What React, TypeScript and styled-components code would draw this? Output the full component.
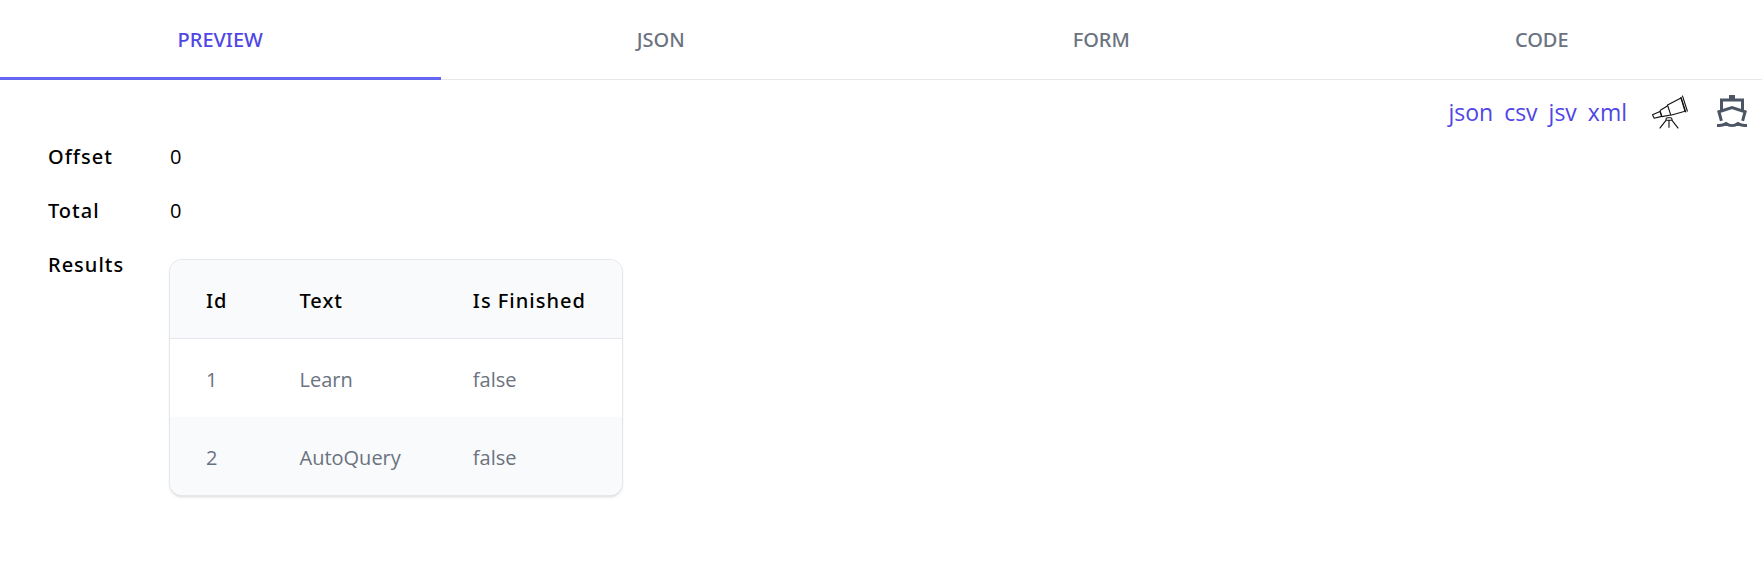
import React, { useState } from "react";
import styled, { createGlobalStyle } from "styled-components";

const GlobalStyle = createGlobalStyle`
  *, *::before, *::after { box-sizing: border-box; }
  body {
    margin: 0;
    background: #fff;
    color: #000;
    font-family: "Segoe UI", "Open Sans", "Noto Sans", sans-serif;
    font-size: 20px;
    line-height: 30px;
  }
`;

const mediumFont = `
  font-family: "Segoe UI", "Noto Sans", "Open Sans", sans-serif;
  font-weight: 500;
`;

const TabBar = styled.nav`
  display: flex;
  border-bottom: 1px solid #e5e7eb;
`;

const Tab = styled.button<{ $active: boolean }>`
  flex: 1 1 0;
  min-width: 0;
  margin: 0 0 -1px;
  padding: 25px 6px 22px;
  border: 0;
  border-bottom: 3px solid ${(p) => (p.$active ? "#6366f1" : "transparent")};
  background: none;
  color: ${(p) => (p.$active ? "#4f46e5" : "#6b7280")};
  font: inherit;
  ${mediumFont}
  text-align: center;
  text-transform: uppercase;
  cursor: pointer;
`;

const Toolbar = styled.div`
  display: flex;
  justify-content: flex-end;
  align-items: center;
  height: 50px;
  padding: 12px 12px 0 0;
`;

const Formats = styled.div`
  display: flex;
  gap: 11px;
  margin-right: 24px;
  padding-top: 2px;
`;

const FormatLink = styled.a`
  color: #4f46e5;
  font-size: 23px;
  line-height: 36px;
  text-decoration: none;
`;

const IconLink = styled.a`
  display: block;
  width: 36px;
  height: 36px;
  color: ${(p) => p.color};

  & + & {
    margin-left: 27px;
  }

  svg {
    display: block;
  }
`;

const Properties = styled.table`
  margin-left: 48px;
  border-collapse: collapse;
`;

const PropertyName = styled.th`
  min-width: 122px;
  padding: 12px 45px 12px 0;
  ${mediumFont}
  letter-spacing: 1px;
  text-align: left;
  vertical-align: top;
`;

const PropertyValue = styled.td<{ $block?: boolean }>`
  padding: ${(p) => (p.$block ? "22px 0" : "12px 0")};
  vertical-align: top;
`;

const Card = styled.div`
  overflow: hidden;
  border-radius: 12px;
  box-shadow: 0 0 0 1px #e5e7eb, 0 2px 3px rgba(0, 0, 0, 0.16);
`;

const DataTable = styled.table`
  border-collapse: separate;
  border-spacing: 0;
`;

const HeadCell = styled.th`
  padding: 26px 36px 22px;
  border-bottom: 1px solid #e5e7eb;
  background: #f9fafb;
  ${mediumFont}
  letter-spacing: 1px;
  text-align: left;
  white-space: nowrap;
`;

const BodyRow = styled.tr`
  background: #fff;

  &:nth-child(even) {
    background: #f9fafb;
  }
`;

const BodyCell = styled.td`
  padding: 26px 36px 22px;
  color: #6b7280;
  white-space: nowrap;
`;

const TelescopeIcon = () => (
  <svg width="36" height="36" viewBox="0 0 36 36" fill="none" stroke="currentColor" strokeWidth="1.1" strokeLinejoin="round" overflow="visible" aria-hidden="true">
    <path d="M1.500 21.800 9 18.600 10.700 23.400 3.200 25.200z" />
    <path d="M9 17.500 16.700 12.800M10.900 23.600 19.700 22M9 17.500 10.900 23.600" />
    <path d="M16.500 12 30 5 34 18.300 19.800 22.200z" />
    <path d="M29.900 4 34.900 19.300M31.400 2.600 36.500 18.500" />
    <path d="M15 27.300v-1q0-1.600 1.600-1.600h2.800q1.600 0 1.600 1.600v1zM15 27.300 8.700 35.300M21 27.300 27.300 35.300M18 27.300v7.500" />
  </svg>
);

const FerryIcon = () => (
  <svg width="36" height="36" viewBox="0 0 36 36" fill="none" stroke="currentColor" strokeWidth="3" aria-hidden="true">
    <path d="M15 2h6v4.500h-6z" fill="currentColor" stroke="none" />
    <path d="M7.500 17V7h21V17" />
    <path d="M7.400 27.800 4.900 18.700 18 14.500l13.100 4.200L28.600 27.800" />
    <path d="M3 32.500h2.500c2.500 0 4.500-.8 6.500-2 3.500 2.600 8.500 2.600 12 0 2 1.200 4 2 6.500 2H33" />
  </svg>
);

const TABS = ["Preview", "JSON", "Form", "Code"];
const FORMATS = ["json", "csv", "jsv", "xml"];
const RESULTS = [
  { id: 1, text: "Learn", isFinished: false },
  { id: 2, text: "AutoQuery", isFinished: false },
];

export default function App() {
  const [active, setActive] = useState("Preview");

  return (
    <>
      <GlobalStyle />
      <TabBar>
        {TABS.map((tab) => (
          <Tab key={tab} type="button" $active={tab === active} onClick={() => setActive(tab)}>
            {tab}
          </Tab>
        ))}
      </TabBar>
      <main>
        <Toolbar>
          <Formats>
            {FORMATS.map((format) => (
              <FormatLink key={format} href={`#${format}`}>{format}</FormatLink>
            ))}
          </Formats>
          <IconLink href="#inspect" color="#111" aria-label="Inspect">
            <TelescopeIcon />
          </IconLink>
          <IconLink href="#ship" color="#4b5563" aria-label="Ship">
            <FerryIcon />
          </IconLink>
        </Toolbar>
        <Properties>
          <tbody>
            <tr>
              <PropertyName scope="row">Offset</PropertyName>
              <PropertyValue>0</PropertyValue>
            </tr>
            <tr>
              <PropertyName scope="row">Total</PropertyName>
              <PropertyValue>0</PropertyValue>
            </tr>
            <tr>
              <PropertyName scope="row">Results</PropertyName>
              <PropertyValue $block>
                <Card>
                  <DataTable>
                    <thead>
                      <tr>
                        <HeadCell scope="col">Id</HeadCell>
                        <HeadCell scope="col">Text</HeadCell>
                        <HeadCell scope="col">Is Finished</HeadCell>
                      </tr>
                    </thead>
                    <tbody>
                      {RESULTS.map((row) => (
                        <BodyRow key={row.id}>
                          <BodyCell>{row.id}</BodyCell>
                          <BodyCell>{row.text}</BodyCell>
                          <BodyCell>{String(row.isFinished)}</BodyCell>
                        </BodyRow>
                      ))}
                    </tbody>
                  </DataTable>
                </Card>
              </PropertyValue>
            </tr>
          </tbody>
        </Properties>
      </main>
    </>
  );
}
